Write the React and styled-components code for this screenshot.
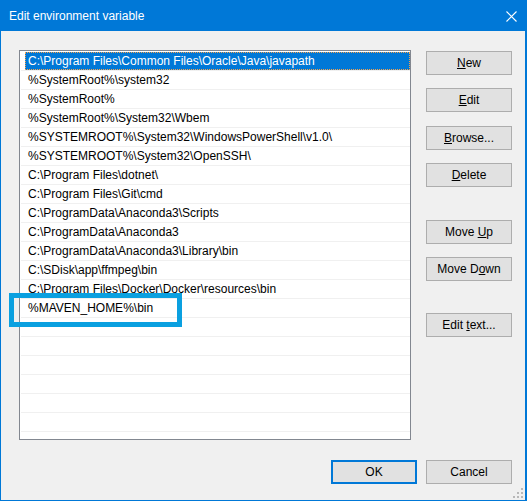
import React from "react";
import styled, { createGlobalStyle } from "styled-components";

const Global = createGlobalStyle`
  html, body { margin: 0; padding: 0; background: #f0f0f0; }
  body { font-family: "Liberation Sans", Arial, sans-serif; font-size: 12px; }
  * { box-sizing: border-box; }
`;

const Window = styled.div`
  position: relative;
  width: 527px;
  height: 501px;
  display: flex;
  flex-direction: column;
  background: #f0f0f0;
  border: 1px solid #0078d7;
  border-top: none;
  border-right-width: 2px;
`;

const TitleBar = styled.div`
  height: 31px;
  flex: none;
  margin: 0 -2px 0 -1px;
  background: #0078d7;
  color: #fff;
  display: flex;
  align-items: center;
  justify-content: space-between;
  padding: 1px 10px 0 9px;
  font-size: 12px;
`;

const Body = styled.div`
  display: grid;
  grid-template-columns: 392px 86px;
  grid-template-rows: 390px auto;
  column-gap: 15px;
  row-gap: 20px;
  padding: 19px 0 0 18px;
`;

const ListBox = styled.div`
  border: 1px solid #828790;
  background: #fff;
  overflow: hidden;
  padding-top: 1px;
`;

const Row = styled.div`
  height: 19px;
  margin-left: 1px;
  border-bottom: 1px solid #f0f0f0;
  padding-left: 4px;
  display: flex;
`;

const Cell = styled.div`
  flex: 1;
  height: 18px;
  line-height: 18px;
  padding-left: 3px;
  white-space: nowrap;
  color: ${(p) => (p.$selected ? "#fff" : "#000")};
  background: ${(p) => (p.$selected ? "#0078d7" : "transparent")};
  outline: ${(p) => (p.$selected ? "1px dotted #f7a24b" : "none")};
  outline-offset: -1px;
`;

const SideButtons = styled.div`
  display: flex;
  flex-direction: column;
`;

const Button = styled.button`
  width: 86px;
  height: 24px;
  margin-top: ${(p) => p.$top || 0}px;
  padding: 0;
  background: #e1e1e1;
  border: ${(p) => (p.$default ? "2px solid #0078d7" : "1px solid #adadad")};
  font-family: "Liberation Sans", Arial, sans-serif;
  font-size: 12px;
  color: #000;
  text-align: center;
  line-height: 18px;
`;

const Key = styled.span`
  text-decoration: underline;
`;

const Footer = styled.div`
  grid-column: 1 / span 2;
  display: flex;
  justify-content: flex-end;
  gap: 9px;
`;

const Highlight = styled.div`
  position: absolute;
  left: 8px;
  top: 293px;
  width: 173px;
  height: 34px;
  border: 5px solid #0aa0e0;
  pointer-events: none;
`;

const Grip = styled.svg`
  position: absolute;
  right: 1px;
  bottom: 1px;
`;

const rows = [
  "C:\\Program Files\\Common Files\\Oracle\\Java\\javapath",
  "%SystemRoot%\\system32",
  "%SystemRoot%",
  "%SystemRoot%\\System32\\Wbem",
  "%SYSTEMROOT%\\System32\\WindowsPowerShell\\v1.0\\",
  "%SYSTEMROOT%\\System32\\OpenSSH\\",
  "C:\\Program Files\\dotnet\\",
  "C:\\Program Files\\Git\\cmd",
  "C:\\ProgramData\\Anaconda3\\Scripts",
  "C:\\ProgramData\\Anaconda3",
  "C:\\ProgramData\\Anaconda3\\Library\\bin",
  "C:\\SDisk\\app\\ffmpeg\\bin",
  "C:\\Program Files\\Docker\\Docker\\resources\\bin",
  "%MAVEN_HOME%\\bin",
];

export default function App() {
  const all = [...rows, ...Array(8).fill("")];
  return (
    <>
      <Global />
      <Window>
        <TitleBar>
          <span>Edit environment variable</span>
          <svg width="11" height="11" viewBox="0 0 11 11">
            <path d="M0.5 0.5 L10.5 10.5 M10.5 0.5 L0.5 10.5" stroke="#fff" strokeWidth="1.1" />
          </svg>
        </TitleBar>
        <Body>
          <ListBox>
            {all.map((t, i) => (
              <Row key={i}>
                <Cell $selected={i === 0}>{t}</Cell>
              </Row>
            ))}
          </ListBox>
          <SideButtons>
            <Button $top={1}><Key>N</Key>ew</Button>
            <Button $top={13}><Key>E</Key>dit</Button>
            <Button $top={14}><Key>B</Key>rowse...</Button>
            <Button $top={13}><Key>D</Key>elete</Button>
            <Button $top={33}>Move <Key>U</Key>p</Button>
            <Button $top={13}>Move D<Key>o</Key>wn</Button>
            <Button $top={32}>Edit <Key>t</Key>ext...</Button>
          </SideButtons>
          <Footer>
            <Button $default>OK</Button>
            <Button>Cancel</Button>
          </Footer>
        </Body>
        <Highlight />
        <Grip width="12" height="12" viewBox="0 0 12 12">
          {[
            [9, 1], [9, 5], [5, 5], [9, 9], [5, 9], [1, 9],
          ].map(([x, y], i) => (
            <rect key={i} x={x} y={y} width="2" height="2" fill="#b8b8b8" />
          ))}
        </Grip>
      </Window>
    </>
  );
}
